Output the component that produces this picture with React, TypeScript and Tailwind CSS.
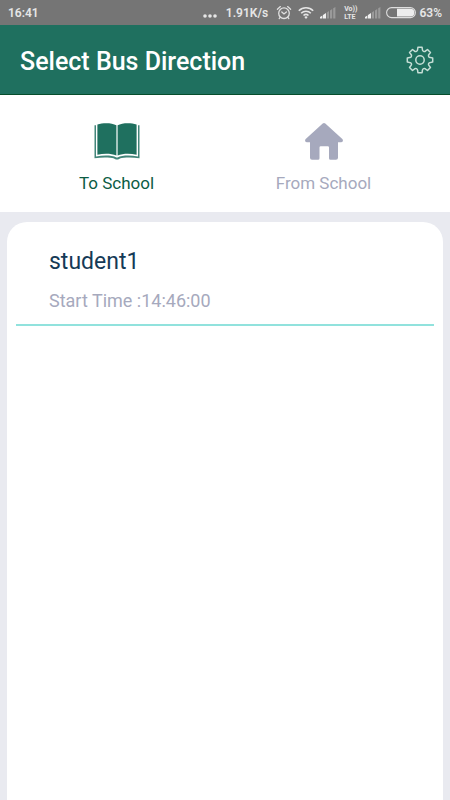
import { useState } from "react";

type Direction = "to" | "from";

const students = [{ name: "student1", startTime: "14:46:00" }];

function gearPath(): string {
  const tooth = [
    [-2.4, -10.4],
    [-2.1, -12.7],
    [2.1, -12.7],
    [2.4, -10.4],
  ];
  let d = "";
  for (let k = 0; k < 8; k++) {
    const a = (k * Math.PI) / 4;
    const pts = tooth.map(([x, y]) => [
      (14 + x * Math.cos(a) - y * Math.sin(a)).toFixed(2),
      (14 + x * Math.sin(a) + y * Math.cos(a)).toFixed(2),
    ]);
    d += k === 0 ? `M${pts[0]}` : `A1.9 1.9 0 0 0 ${pts[0]}`;
    d += `L${pts[1]}L${pts[2]}L${pts[3]}`;
  }
  return d + "A1.9 1.9 0 0 0 11.6 3.6Z";
}

function GearIcon() {
  return (
    <svg className="size-7" viewBox="0 0 28 28" fill="none" stroke="#c6ded6" strokeWidth="1.5" strokeLinejoin="round" aria-hidden="true">
      <path d={gearPath()} />
      <circle cx="14" cy="14" r="4.2" />
    </svg>
  );
}

function DotsIcon() {
  return (
    <svg className="h-4 w-4" viewBox="0 0 16 16" fill="#e6e6e6" aria-hidden="true">
      <circle cx="3" cy="11" r="1.8" />
      <circle cx="8" cy="11" r="1.8" />
      <circle cx="13" cy="11" r="1.8" />
    </svg>
  );
}

function AlarmIcon() {
  return (
    <svg className="size-4" viewBox="0 0 16 16" fill="none" stroke="#e0e0e0" strokeWidth="1.3" strokeLinecap="round" aria-hidden="true">
      <circle cx="8" cy="8.2" r="5.3" />
      <path d="M1.4 4.2 4.4 1.6M14.6 4.2 11.6 1.6M5.8 7 8 9l2.4-2M4.3 12.2 3.2 13.6M11.7 12.2l1.1 1.4" />
    </svg>
  );
}

function WifiIcon() {
  return (
    <svg className="size-4" viewBox="0 0 16 16" fill="none" stroke="#e6e6e6" strokeWidth="1.6" aria-hidden="true">
      <path d="M.8 5.7a10.2 10.2 0 0 1 14.4 0M3.2 8.2a6.8 6.8 0 0 1 9.6 0M5.5 10.5a3.6 3.6 0 0 1 5 0" />
      <path d="m8 13.9-1.7-1.8a2.5 2.5 0 0 1 3.4 0Z" fill="#e6e6e6" stroke="none" />
    </svg>
  );
}

function SignalIcon() {
  return (
    <svg className="size-4" viewBox="0 0 16 16" aria-hidden="true">
      <path d="M0 13.5V12l2.4-1.5v3ZM3 13.5V10l3-2v5.5Z" fill="#f0f0f0" />
      <path d="M6.8 13.5V7.6L9 6.1v7.4ZM10 13.5V5.4l2.2-1.5v9.6ZM13.2 13.5V3.3l2.2-1.4v11.6Z" fill="#9a9a9a" />
    </svg>
  );
}

function BatteryIcon() {
  return (
    <svg className="h-4 w-8" viewBox="0 0 32 16" aria-hidden="true">
      <rect x="1.6" y="2.6" width="28.8" height="10" rx="5" fill="none" stroke="#dedede" strokeWidth="1.1" />
      <path d="M12 3.7h13.5a3.9 3.9 0 0 1 0 7.8H12Z" fill="#ededed" />
    </svg>
  );
}

function BookIcon() {
  return (
    <svg className="h-10 w-12" viewBox="0 0 48 40" fill="#1f705f" aria-hidden="true">
      <path d="M4.4 3.4C10.5 1.7 19 1.900 23.4 4.3v30.3c-5-2.2-12.4-2.300-19-.9Z" />
      <path d="M43.6 3.4C37.5 1.7 29 1.900 24.6 4.3v30.3c5-2.2 12.4-2.300 19-.9Z" />
      <path d="M3 4.2H1.500v33c8-1.200 15.500-1 19.700.2 1 1.400 4.600 1.400 5.600 0 4.200-1.200 11.700-1.400 19.700-.2v-33H45v31.300c-8-1.500-15.800-1.300-20.500.9h-1c-4.700-2.200-12.500-2.400-20.500-.9Z" fill="#43867a" />
    </svg>
  );
}

function HomeIcon() {
  return (
    <svg className="h-10 w-12" viewBox="0 0 48 40" fill="#a6a9bd" aria-hidden="true">
      <path d="M22.7 2.5q1.3-1.1 2.6 0L42.3 18q1 1.1.5 2.2-.5 1-1.800 1H38v15.500q0 2-2 2h-5.500q-1.500 0-1.500-1.500V26.500q0-1.200-1.200-1.200h-7.100q-1.200 0-1.200 1.200v10.700q0 1.500-1.500 1.500h-6q-2 0-2-2V21.200H7q-1.300 0-1.800-1-.5-1.100.5-2.200Z" />
    </svg>
  );
}

export default function App() {
  const [direction, setDirection] = useState<Direction>("to");

  return (
    <div className="flex min-h-screen flex-col bg-[#e9eaf0] font-['Roboto','Liberation_Sans',sans-serif]">
      <div className="flex h-[25px] items-center bg-[#757575] px-2 text-[12px] font-semibold text-[#e6e6e6]">
        <span>16:41</span>
        <div className="ml-auto flex items-center gap-2">
          <DotsIcon />
          <span>1.91K/s</span>
          <div className="flex items-center gap-1.5">
            <AlarmIcon />
            <WifiIcon />
            <SignalIcon />
          </div>
          <span className="flex flex-col text-[7px] leading-[8px] font-bold">
            <span>Vo))</span>
            <span>LTE</span>
          </span>
          <div className="flex items-center gap-1">
            <SignalIcon />
            <div className="flex items-center gap-0.5">
              <BatteryIcon />
              <span>63%</span>
            </div>
          </div>
        </div>
      </div>

      <header className="flex h-[70px] items-center justify-between border-b border-[#064d2c] bg-[#1f705f] pr-4 pl-5">
        <h1 className="pt-1 text-[25px] leading-8 font-medium text-white">Select Bus Direction</h1>
        <button type="button" aria-label="Settings">
          <GearIcon />
        </button>
      </header>

      <nav className="grid h-[117px] grid-cols-2 bg-white pt-[26px] pr-[23px] pl-[13px]">
        <button
          type="button"
          aria-pressed={direction === "to"}
          onClick={() => setDirection("to")}
          className="flex flex-col items-center gap-2.5 text-[17px] leading-6 text-[#0c5c44]"
        >
          <BookIcon />
          To School
        </button>
        <button
          type="button"
          aria-pressed={direction === "from"}
          onClick={() => setDirection("from")}
          className="flex flex-col items-center gap-2.5 text-[17px] leading-6 text-[#a6a9bd]"
        >
          <HomeIcon />
          From School
        </button>
      </nav>

      <main className="mx-[7px] mt-2.5 grow rounded-t-[20px] bg-white px-[9px] pt-6">
        <ul>
          {students.map((student) => (
            <li key={student.name} className="border-b-2 border-[#91e2dd] px-[33px] pb-[11px]">
              <h2 className="text-[23px] leading-8 text-[#153a56]">{student.name}</h2>
              <p className="mt-[11px] text-[18px] leading-6 text-[#a6a9bd]">Start Time :{student.startTime}</p>
            </li>
          ))}
        </ul>
      </main>
    </div>
  );
}
